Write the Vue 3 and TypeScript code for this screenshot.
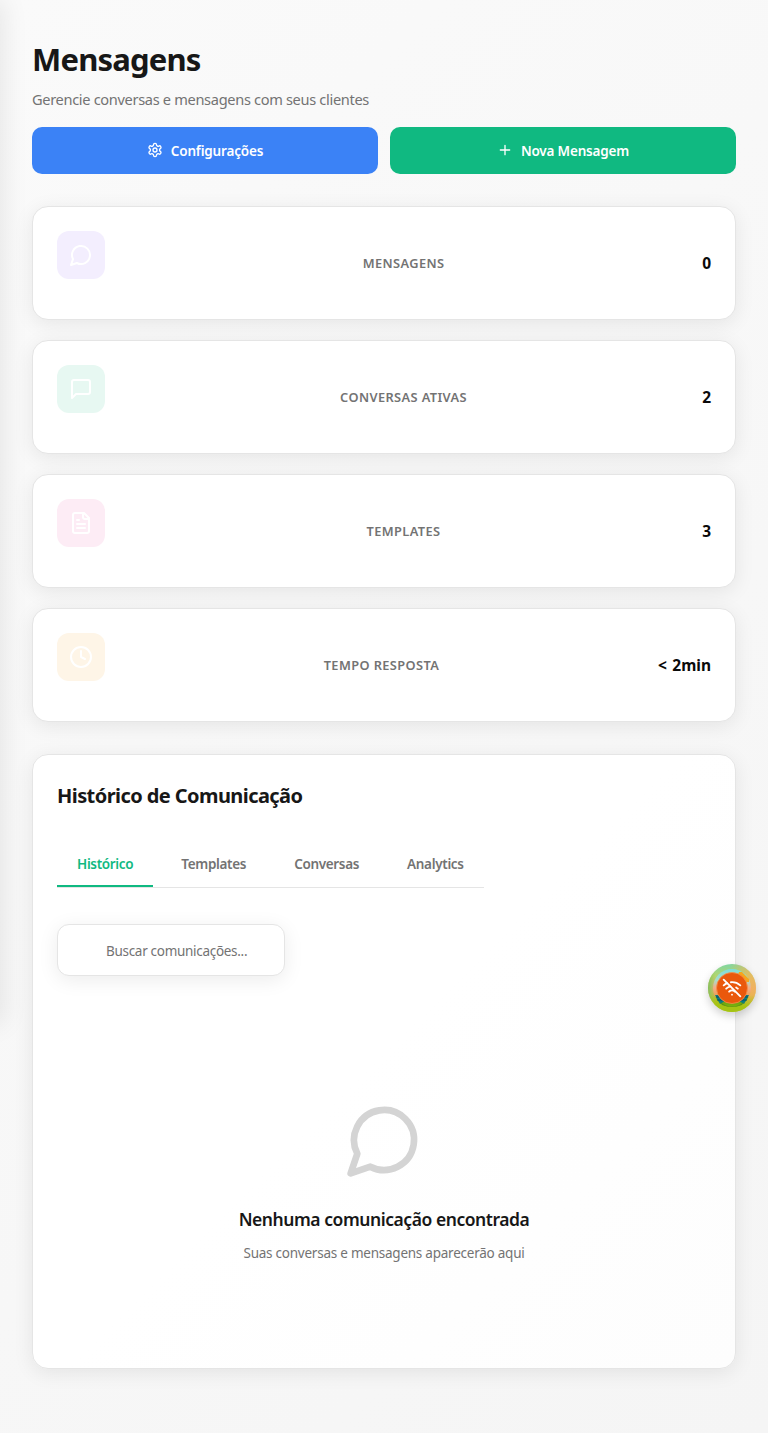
<script setup lang="ts">
import { ref } from 'vue'

interface Stat {
  label: string
  value: string
  tone: string
  paths: string[]
}

const bubble = 'M7.9 20A9 9 0 1 0 4 16.1L2 22Z'

const stats: Stat[] = [
  { label: 'Mensagens', value: '0', tone: 'violet', paths: [bubble] },
  {
    label: 'Conversas Ativas',
    value: '2',
    tone: 'green',
    paths: ['M21 15a2 2 0 0 1-2 2H7l-4 4V5a2 2 0 0 1 2-2h14a2 2 0 0 1 2 2z'],
  },
  {
    label: 'Templates',
    value: '3',
    tone: 'pink',
    paths: [
      'M15 2H6a2 2 0 0 0-2 2v16a2 2 0 0 0 2 2h12a2 2 0 0 0 2-2V7Z',
      'M14 2v4a2 2 0 0 0 2 2h4',
      'M10 9H8',
      'M16 13H8',
      'M16 17H8',
    ],
  },
  {
    label: 'Tempo Resposta',
    value: '< 2min',
    tone: 'amber',
    paths: ['M12 2a10 10 0 1 0 0 20a10 10 0 1 0 0-20', 'M12 6v6l4 2'],
  },
]

const tabs: string[] = ['Histórico', 'Templates', 'Conversas', 'Analytics']
const activeTab = ref<string>('Histórico')
const search = ref<string>('')
</script>

<template>
  <div class="page">
    <aside class="drawer"></aside>

    <header>
      <h1>Mensagens</h1>
      <p class="subtitle">Gerencie conversas e mensagens com seus clientes</p>
      <div class="actions">
        <button class="btn blue">
          <svg class="icon" viewBox="0 0 24 24">
            <path d="M12.22 2h-.44a2 2 0 0 0-2 2v.18a2 2 0 0 1-1 1.73l-.43.25a2 2 0 0 1-2 0l-.15-.08a2 2 0 0 0-2.73.73l-.22.38a2 2 0 0 0 .73 2.73l.15.1a2 2 0 0 1 1 1.72v.51a2 2 0 0 1-1 1.74l-.15.09a2 2 0 0 0-.73 2.73l.22.38a2 2 0 0 0 2.73.73l.15-.08a2 2 0 0 1 2 0l.43.25a2 2 0 0 1 1 1.73V20a2 2 0 0 0 2 2h.44a2 2 0 0 0 2-2v-.18a2 2 0 0 1 1-1.73l.43-.25a2 2 0 0 1 2 0l.15.08a2 2 0 0 0 2.73-.73l.22-.39a2 2 0 0 0-.73-2.73l-.15-.08a2 2 0 0 1-1-1.74v-.5a2 2 0 0 1 1-1.74l.15-.09a2 2 0 0 0 .73-2.73l-.22-.38a2 2 0 0 0-2.73-.73l-.15.08a2 2 0 0 1-2 0l-.43-.25a2 2 0 0 1-1-1.73V4a2 2 0 0 0-2-2z" />
            <circle cx="12" cy="12" r="3" />
          </svg>
          <span>Configurações</span>
        </button>
        <button class="btn emerald">
          <svg class="icon" viewBox="0 0 24 24"><path d="M5 12h14M12 5v14" /></svg>
          <span>Nova Mensagem</span>
        </button>
      </div>
    </header>

    <section class="stats">
      <article v-for="s in stats" :key="s.label" class="card stat">
        <div class="tile" :class="s.tone">
          <svg class="icon" viewBox="0 0 24 24"><path v-for="p in s.paths" :key="p" :d="p" /></svg>
        </div>
        <span class="label">{{ s.label }}</span>
        <span class="value">{{ s.value }}</span>
      </article>
    </section>

    <section class="card history">
      <h2>Histórico de Comunicação</h2>
      <nav class="tabs">
        <button
          v-for="t in tabs"
          :key="t"
          class="tab"
          :class="{ active: t === activeTab }"
          @click="activeTab = t"
        >{{ t }}</button>
      </nav>
      <input v-model="search" class="search" type="text" placeholder="Buscar comunicações..." />
      <div class="empty">
        <svg class="icon" viewBox="0 0 24 24"><path :d="bubble" /></svg>
        <h3>Nenhuma comunicação encontrada</h3>
        <p>Suas conversas e mensagens aparecerão aqui</p>
      </div>
    </section>

    <div class="fab">
      <svg viewBox="0 0 48 48">
        <defs>
          <linearGradient id="ring" x1="0" y1="0" x2="0" y2="1">
            <stop offset="0" stop-color="#7fd6a4" />
            <stop offset=".25" stop-color="#b4d66e" />
            <stop offset=".52" stop-color="#e0ab71" />
            <stop offset=".72" stop-color="#b9bd2c" />
            <stop offset="1" stop-color="#9fc50c" />
          </linearGradient>
          <linearGradient id="warm" x1="0" y1="0" x2="1" y2="0">
            <stop offset=".45" stop-color="#f6b44d" stop-opacity="0" />
            <stop offset=".9" stop-color="#f6b25c" stop-opacity=".75" />
          </linearGradient>
          <linearGradient id="leaf" x1="0" y1="0" x2="1" y2="0">
            <stop offset="0" stop-color="#7cc35a" />
            <stop offset=".16" stop-color="#9bcb5a" stop-opacity="0" />
          </linearGradient>
          <linearGradient id="scene" x1="0" y1="0" x2="0" y2="1">
            <stop offset="0" stop-color="#7edcd8" />
            <stop offset=".3" stop-color="#a9dccb" />
            <stop offset=".5" stop-color="#f5ac83" />
            <stop offset=".7" stop-color="#e8a05d" />
            <stop offset=".8" stop-color="#5f9d13" />
            <stop offset="1" stop-color="#7db60c" />
          </linearGradient>
          <linearGradient id="base" x1="0" y1="0" x2="0" y2="1">
            <stop offset=".65" stop-color="#a5c313" stop-opacity="0" />
            <stop offset=".9" stop-color="#a5c313" />
          </linearGradient>
        </defs>
        <circle cx="24" cy="24" r="24" fill="url(#ring)" />
        <circle cx="24" cy="24" r="24" fill="url(#warm)" />
        <circle cx="24" cy="24" r="24" fill="url(#leaf)" />
        <circle cx="24" cy="24" r="24" fill="url(#base)" />
        <circle cx="24" cy="24" r="19" fill="url(#scene)" />
        <path d="M31 8h3l7 7v3h-5l-6-7z" fill="#f7a51b" />
        <path d="M7 31h6l4 6-5 3zM41 31h-6l-4 6 5 3z" fill="#087c83" />
        <path d="M8 33h5M9 36h6M40 33h-5M39 36h-6" stroke="#064c65" stroke-width="1" />
        <path d="M12 38q12 9 24 0l-2 3q-10 4-20 0z" fill="#5b9212" />
        <circle cx="24" cy="24" r="15.5" fill="#ea580c" stroke="#f5914d" stroke-width=".8" />
        <g class="wifi" transform="translate(14 14) scale(.8333)">
          <path d="M12 20h.01" />
          <path d="M8.5 16.429a5 5 0 0 1 7 0" />
          <path d="M5 12.859a10 10 0 0 1 5.17-2.69" />
          <path d="M19 12.859a10 10 0 0 0-2.007-1.523" />
          <path d="M2 8.82a15 15 0 0 1 4.177-2.643" />
          <path d="M22 8.82a15 15 0 0 0-11.288-3.764" />
          <path d="m2 2 20 20" />
        </g>
      </svg>
    </div>
  </div>
</template>

<style>
body {
  margin: 0;
}
</style>

<style scoped>
.page {
  position: relative;
  box-sizing: border-box;
  height: 1433px;
  padding: 32px;
  overflow: hidden;
  background: linear-gradient(135deg, #fafafa 0%, #f5f5f5 100%);
  font-family: 'Noto Sans', 'Open Sans', sans-serif;
  color: #171717;
}
h1, h2, h3, p {
  margin: 0;
}
button, input {
  font-family: inherit;
}
.icon {
  display: block;
  fill: none;
  stroke: currentColor;
  stroke-width: 2;
  stroke-linecap: round;
  stroke-linejoin: round;
}
.drawer {
  position: absolute;
  left: -280px;
  top: 0;
  width: 280px;
  height: 1024px;
  box-shadow: 4px 0 24px rgba(0, 0, 0, 0.08);
}
h1 {
  font-size: 31px;
  line-height: 55px;
  font-weight: 700;
  letter-spacing: -0.8px;
}
.subtitle {
  font-size: 14.6px;
  line-height: 24px;
  color: #737373;
  letter-spacing: -0.33px;
}
.actions {
  display: grid;
  grid-template-columns: 1fr 1fr;
  gap: 12px;
  margin-top: 16px;
}
.btn {
  display: flex;
  align-items: center;
  justify-content: center;
  gap: 8px;
  height: 47px;
  padding: 0;
  border: 0;
  border-radius: 10px;
  color: #fff;
  font-size: 13.5px;
  font-weight: 600;
  letter-spacing: -0.18px;
}
.btn .icon {
  width: 16px;
  height: 16px;
  margin-bottom: 2px;
}
.blue { background: #3b82f6; }
.emerald { background: #10b981; }
.stats {
  display: grid;
  gap: 20px;
  margin-top: 32px;
}
.card {
  box-sizing: border-box;
  border: 1px solid #e5e5e5;
  border-radius: 16px;
  background: #fff;
  box-shadow: 0 4px 20px rgba(0, 0, 0, 0.08);
}
.stat {
  display: flex;
  align-items: center;
  justify-content: space-between;
  height: 114px;
  padding: 24px;
}
.tile {
  display: grid;
  place-items: center;
  align-self: flex-start;
  width: 48px;
  height: 48px;
  border-radius: 12px;
  color: #fff;
}
.tile .icon {
  width: 24px;
  height: 24px;
}
.tile.violet { background: #f3eefe; }
.tile.green { background: #e7f8f2; }
.tile.pink { background: #fdecf5; }
.tile.amber { background: #fef5e7; }
.label {
  color: #737373;
  font-size: 12.8px;
  font-weight: 600;
  letter-spacing: 0.4px;
  text-transform: uppercase;
}
.value {
  color: #0a0a0a;
  font-size: 15.5px;
  font-weight: 700;
  word-spacing: 1.5px;
}
.history {
  display: flex;
  flex-direction: column;
  align-items: flex-start;
  height: 615px;
  margin-top: 32px;
  padding: 24px;
  background: linear-gradient(135deg, #fff 0%, #fff 49%, #fdfdfd 100%);
}
h2 {
  font-size: 20px;
  line-height: 34px;
  font-weight: 700;
  letter-spacing: -0.57px;
}
.tabs {
  display: flex;
  gap: 8px;
  margin-top: 28px;
  border-bottom: 1px solid #e5e5e5;
}
.tab {
  height: 46px;
  padding: 2px 20px 0;
  border: 0;
  border-bottom: 2px solid transparent;
  background: none;
  color: #737373;
  font-size: 13.5px;
  font-weight: 600;
  letter-spacing: -0.33px;
}
.tab.active {
  border-color: #10b981;
  color: #10b981;
}
.search {
  box-sizing: border-box;
  width: 228px;
  height: 52px;
  margin-top: 36px;
  padding: 2px 16px 0 48px;
  border: 1px solid #e5e5e5;
  border-radius: 12px;
  outline: 0;
  background: #fff;
  box-shadow: 0 4px 20px rgba(0, 0, 0, 0.08);
  font-size: 13.5px;
  letter-spacing: -0.3px;
}
.search::placeholder {
  color: #737373;
}
.empty {
  display: flex;
  flex-direction: column;
  align-items: center;
  width: 100%;
  margin-top: 124px;
}
.empty .icon {
  width: 80px;
  height: 80px;
  color: #d4d4d4;
}
h3 {
  margin-top: 24px;
  font-size: 17.5px;
  line-height: 30px;
  font-weight: 600;
  letter-spacing: -0.45px;
}
.empty p {
  margin-top: 8px;
  color: #737373;
  font-size: 13.5px;
  line-height: 22px;
  letter-spacing: -0.24px;
}
.fab {
  position: absolute;
  left: 708px;
  top: 964px;
  width: 48px;
  height: 48px;
  border-radius: 50%;
  box-shadow: 0 4px 8px rgba(0, 0, 0, 0.18);
}
.fab svg {
  display: block;
}
.wifi {
  fill: none;
  stroke: #fff;
  stroke-width: 2.2;
  stroke-linecap: round;
  stroke-linejoin: round;
}
</style>
